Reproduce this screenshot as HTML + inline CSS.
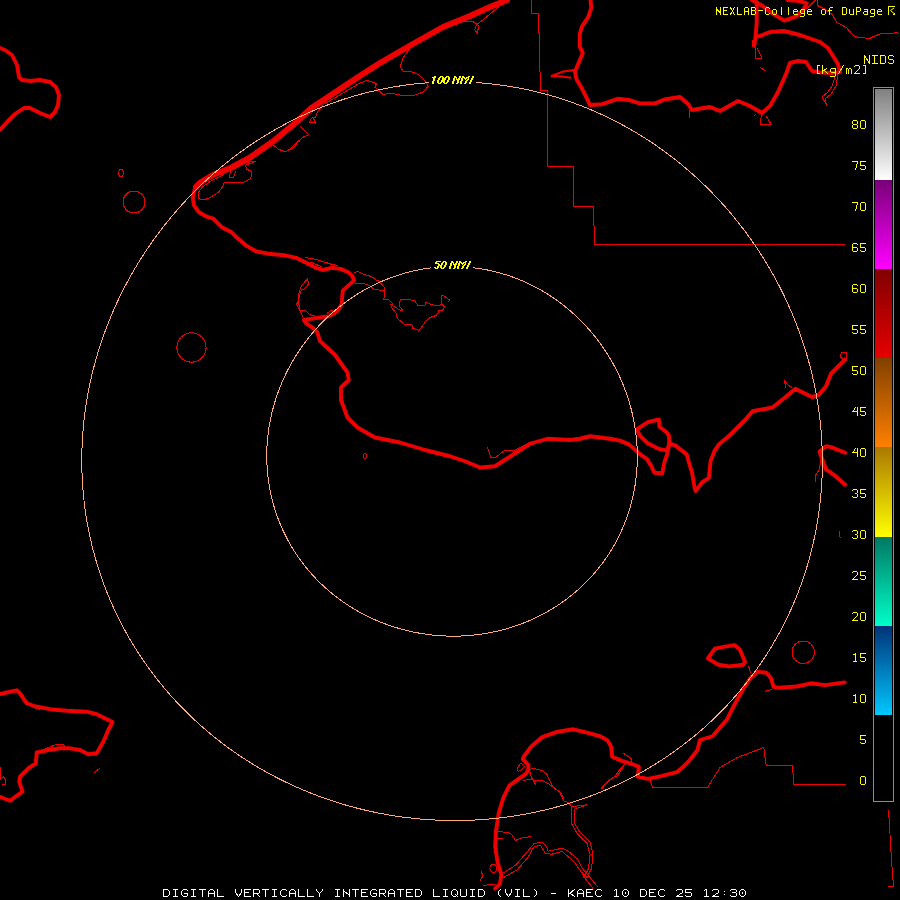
<!DOCTYPE html>
<html><head><meta charset="utf-8"><style>
html,body{margin:0;padding:0;background:#000;width:900px;height:900px;overflow:hidden}
body{position:relative;font-family:"Liberation Mono",monospace}
.t{position:absolute;white-space:pre;line-height:1;color:#ff0}
.lab{position:absolute;right:33px;font-size:14.5px;letter-spacing:-0.7px;line-height:16px;color:#ff0;font-family:"Liberation Mono",monospace}
.ring{position:absolute;font-family:"Liberation Sans",sans-serif;font-style:italic;font-weight:bold;font-size:11.5px;color:#ff0;line-height:1}
</style></head><body>
<svg width="900" height="900" viewBox="0 0 900 900" style="position:absolute;left:0;top:0"><rect width="900" height="900" fill="#000"/><g fill="none" stroke="#ee0000" stroke-width="1" stroke-linejoin="round" shape-rendering="crispEdges"><polyline points="521,762.8 518.3,766.3 517.4,769 518.3,771.7 522.3,769 524.6,766.3 521,762.8"/><polyline points="531.5,0 531.5,13.5 538.5,13.5 540.5,90.5 547.5,90.5 547.5,166.5 573.5,166.5 573.5,206.5 593.5,206.5 594.5,244.5 845,244.5"/><polyline points="815.6,0 806.7,8.9"/><polyline points="817.8,0 817.8,5.6 824.4,8.9 832.2,14.4 836.7,22.2 840,23.9 846.7,27.8 854.4,36.7 862.2,37.8 870,38.3 874.4,36.1 882.2,33.3 891,33.9 896.7,32.2 899,33.3"/><polyline points="652.8,787.5 707.5,787.5 720,767.5 737.5,757.5 763.75,747.5 766.25,765.5 792.5,765.5 793.75,784.5 846.25,784.5"/><polyline points="650,780 651.7,785.6 652.8,787.5"/><polyline points="888.5,810 889.5,825 890.5,843 891.5,860 892.5,873 893.5,886.5 888.5,887"/><polyline points="501.3,4.7 482.6,20.2 476.4,24.9 474.9,29.5 477.2,33.4 478.8,25.7 473.3,21.8 464,21 454.6,24.9 442.2,27.2 426.7,34.2 411.1,46.7 403.3,57.5 400.2,66.9 403.3,71.5 411.1,71.5 418.9,74.7 425.1,80.9 428.2,86.3 423.5,91.8 415.8,94.9 404.4,95.9 392,93.5 382.6,94.3 378,89.7 374.9,87.3 376.4,83.4 367.1,80.3 359.3,83.4 350,88.9 342.2,93.5 334.4,98.2 323.5,104.4 317.3,112.2 315.8,116.9 311.1,118.4 309.5,122.3 315.8,123.1 312.7,116.9"/><polyline points="300.2,126.2 308.8,134.8 303.3,137.1 295.6,143.3 289.3,149.5 285.3,152 278.7,149.3 272,144"/><polyline points="285.3,152 293.3,148 297.3,142.7 300,140.7"/><polyline points="244,162.7 256,161.3 249.3,164 245.3,165.3 246.7,169.3 252,171.3 250.7,178.7 242.7,182.7 233.3,182.7 224,182.7 222.7,186.7 218.7,192 210.7,197.3 204,200 198.7,198.7 198.7,192 202.7,186.7 210.7,181.3 218.7,177.3 225.3,173.3"/><polyline points="230.7,170.7 229.3,177.3 233.3,178 236,170.7"/><polyline points="305,257.8 311.7,258.3 321.7,261.1 331.7,264.4 338.3,265.6"/><polyline points="310.6,262.2 316.1,264.4 321.7,266.7"/><polyline points="353.9,272.2 358.3,271.7 362.8,273.9 371.7,276.7 376.1,280 379,281 384.5,287.5 384,293 385,294.5 383.5,300 388,299 393,304 391.5,307.5 396,313 397.5,318.5 404,324 412,325 412,328 419,330.5 426,321 430,317.5 436,315.5 439,312 438,310 442,311 444.5,307 442,304.5 441,295 444,296 449.5,300 448.5,302.5"/><polyline points="442,304.5 440,305 434,305 430,304 426,302 425,305 418,306 415,301 409,299.5 401,299.5 399,303 400,307 402.5,310 400,310 395,307 390,304"/><polyline points="355,283.9 362.8,283.3 369.4,285.6 373.9,288.9 379.4,290 384.5,290"/><polyline points="307.8,278.3 308.3,284.4 303.9,288.9 300.6,291.1 299.4,296.7 296.7,304.4 299.4,310 306.1,311.1 309.4,314.4 315,316.1 321.7,316.7"/><polyline points="307.8,278.3 301.7,285.6 299.4,291.1 298.3,297.8 299.4,308.9 302.8,316.7"/><polyline points="327.2,313.3 331.7,310 336.1,314.4"/><polyline points="487.5,447.5 491,457.5 495,458 505,450 515,450 525,445 530,443"/><polyline points="752,40 752,46 756,48 755,59 762,58 757,48"/><polyline points="760,67 765,71"/><polyline points="762,113 760,124 771,124 766,116"/><polyline points="756,114 754,116"/><polyline points="690,110 689,118"/><polyline points="836,74 832,86 828,92 822,97 826,104"/><polyline points="838,74 836,86 831,94 825,99 827,106"/><polyline points="526.7,771.3 532.9,768.2 542.2,770.5 546.9,774.4 550,780.7 553.1,786.9 559.3,791.5 562.4,797.8 564,800.9 568.6,802.4 571.8,807.1 571.4,823.3 577.6,834.2 587,843.5 590.1,854.4 588.5,868.4 583.9,877.8"/><polyline points="574.5,809.3 574.5,823.3 580.3,832.5 590,842 593,854.4 591.5,868.4 587,877.8 582,872"/><polyline points="523.5,780.7 529.8,779.1 536,780.7 542.2,780.7 548.4,783.8 554.6,788.4 560.9,793.1 564,799.3"/><polyline points="529.8,771.3 531.3,777.5 534.4,782.2 536,785.3"/><polyline points="571.8,807.1 579.5,805.5 587.3,804.8"/><polyline points="574.5,809.3 587,804.7"/><polyline points="601.3,788.4 607.5,782.2 615.3,776 618.4,771.3 624.4,764.4"/><polyline points="602.2,788.9 605.6,783.3 612.2,777.8 617.8,775.6 621.1,770 624.4,764.4"/><polyline points="498.3,831.1 510.8,833.4 515.4,840.4 521.7,838.1 531,836.5"/><polyline points="498.3,838.9 503,838.9"/><polyline points="503,873.1 515.4,865.3 526.3,852.9 534.1,843.5 541.9,842 546.5,846.7 548.1,851.3 562.1,848.2 568.3,851.3 577.6,859.1 582.3,868.4 590.1,877.8 597.9,887.1"/><polyline points="503,877.8 517,870 527.9,857.5 534.1,846.7 540.3,845.1 545,852.9 551.2,854.4 562.1,851.3 574.5,862.2 580.8,871.5 587,880.9 593.2,888.6"/><polyline points="482.8,885.5 495.2,884"/><polyline points="481,871 483,876 480,881"/><polyline points="748.7,666.4 750.4,672.7"/><polyline points="764.7,691.3 771.8,689.6"/><polyline points="623.3,753.3 631.1,758.3 632,762"/><polyline points="822,455 819,470 815,476 816,482"/><polyline points="843,360 840,356 842,352 846,352 846,358"/><polyline points="786,388 784,380 787,384 792,388"/><polyline points="94.2,772.5 100,768.3"/><polyline points="0,766.7 0,780 3.3,776.7 5.8,780 5,785 1.7,784"/><polyline points="26,700 33,707 40,710"/><polyline points="45,749 55,745 63,744 65,747"/><polyline points="840,531 839,536 841,538"/><ellipse cx="134" cy="202" rx="11" ry="11"/><ellipse cx="121" cy="173" rx="2.5" ry="3.5"/><ellipse cx="191.5" cy="347.5" rx="14.6" ry="14.7"/><ellipse cx="803.2" cy="652.2" rx="11.2" ry="11.2"/><ellipse cx="365" cy="456" rx="1.5" ry="2.5"/><ellipse cx="493.4" cy="868.4" rx="3.5" ry="4"/></g><g fill="none" stroke="#ee0000" stroke-width="3.9" stroke-linejoin="round" stroke-linecap="round"><polyline points="0,48 5,50 12,55 17,65 19,77 22,80 30,81 40,80 50,82 56,87 59,95 58,105 55,112 50,117 40,113 30,108 24,108 15,114 8,121 0,130"/><polyline points="200,182.7 194.7,189.3 192.7,197.3 194,205.3 198.7,212 206.7,216.7 213.3,218.7 221.8,227.2 231.1,231.9 237.3,238.1 246.7,245.9 256,251.3 268.4,253.7 284,255.2 296.1,257.8 307.2,263.3 316.1,267.8 322.8,270 331.7,267.8 340.6,268.9 348.3,272.2 352.8,276.7 353.9,280.6 348.3,285.6 342.8,290.6 342.2,296.7 341.7,304.4 337.2,311.1 329.4,316.1 318.3,317.8 307.2,319.4 303.9,320 306.1,323.3 312.8,327.8 317.2,332.2 320,341 335,355 347.5,372.5 348.75,380 341,387.5 341,400 347.5,417.5 357.5,427.5 375,437.5 400,442.5 425,450 450,456.25 465,461.25 480,467.5 495,466.25 512.5,455 530,443.75 547.5,438.75 570,440 580,438.75 590,436.25 610,438.75 620,440.6 628.9,444.4 638.9,453.3 646.7,458.9 651.1,465.6 654.4,472.8 662.2,473.3 664.4,462.2 666.7,455.6 667.8,451.1 669.4,443.3 675.6,445.6 686.7,454.4 688.9,462.2 692.2,473.3 694.4,486.7 695.6,491.1 702.2,482.2 708.9,477.8 710.6,461.1 714.4,451.1 718.9,444.4 730,435 745,420 752.5,411.25 772.5,407.5 785,397.5 795.3,388.8 812,397 818.4,395.2 826,386.3 831.1,373.5 845.2,359.4"/><polyline points="590.5,0 591.3,7.8 588.2,17.1 582,26.4 579.7,34.2 579.7,46.7 582.8,52.9 578.9,62.2 575,71.5 576.5,79.3 582,88.6 588.2,101.1 589.8,105 602.2,104.2 617.8,98.8 630.2,100.3 639.5,103.4 655.1,103.4 664.4,99.5 680,97 688,104 692,110 710,107 720,111 738,101 750,106 762,113 770,106 778,92 786,74 790,63 798,61 806,62 812,71 820,72.4 832,73 840,72 838,64 828,48 820,42 800,35 784,31 770,32 760,36 755.6,36.7"/><polyline points="752.2,0 756.7,2.2 756.7,22.2 755.6,36.7 754.4,45"/><polyline points="752.2,0 762.2,5.6 772.2,13.3 784.4,20.6 795.6,16.7 803.3,10 806.7,3.3 800,1.1 787.8,0"/><polyline points="845.2,452.7 831.1,447.1 826,446.3 819.6,451.5 820.9,455.3 826,469.4 835,475.7 845.2,484.7"/><polyline points="844.7,682.4 825.1,685.1 810.9,683.3 796.7,686.5 778.9,687.8 773.6,686.9 770.9,678 766.4,672.7 757.6,671.8 750.4,678 743.3,688.7 734.4,704.7 727.3,718.9 712.5,736.25 700,740 697.5,750 688.9,761.1 683.3,766.7 676.7,772.2 661.1,776.1 647.8,778.9 637.8,776.7 638.9,766.7 630,763.3 621.1,760.6 612.2,756.7 611.1,746.7 607.8,740.6 601.1,736.7 590,733.3 573.3,729.3 557.8,731.7 542.2,737.1 531.3,746.4 523.7,756.6 522.8,759.2 526.3,762.8 528.6,765.4 528.1,769.9 526.3,773.4 522.8,776.1 518.3,779.2 512.1,783.7 509.5,785.3 503.3,797.8 498.7,813.3 496,831.1 495.2,846.7 497.6,862.2 501.4,874.7 499.9,884 495.2,888.6"/><polyline points="0,694.2 6.7,692.5 16.7,690.3 20,693.3 26.7,703.3 33.3,705.8 50,709.2 66.7,710.8 86.7,711.7 96.7,714.2 112.5,722 108.3,730 103.3,741.7 96.7,753.3 88.3,754.2 80,750 70,748.3 60,748.3 48.3,750 36.7,752.5 35.8,763.3 28.3,768.3 20,776.7 19.2,781.7 22.5,791.7 16.7,795.8 10,800.8 1.7,797.5 0,796.7"/><polygon points="636.7,429.4 647.8,422.2 658.9,419.4 659.4,426.7 666.7,432.2 668.9,435.6 669.4,443.3 667.2,450.6 658.9,448.9 647.8,443.3 640,435.6"/><polygon points="707.8,658.4 714.9,648.7 723.8,646.9 734.4,645.1 739.8,649.6 745.1,662 743.3,664.7 729.1,666.4 718.4,664.7"/></g><g fill="none" stroke="#ee0000" stroke-width="2"><polyline points="574.2,70 563.3,71.5 550.9,76.2 560.2,76.2 571.1,77.8"/></g><g fill="none" stroke="#ee0000" stroke-width="6" stroke-linejoin="round" stroke-linecap="round"><polyline points="507,0 490,7 470,16 443,27 411,45 380,63 357.8,77.2 311.1,108.3 297.3,121.3 273.3,141.3 249.3,158 230.7,168 213.3,174.7 200,182.7 196,187"/></g><g fill="none" stroke="#ffaa7d" stroke-width="1" shape-rendering="crispEdges"><polygon points="637.23,451.5 637.29,454.73 637.3,457.97 637.25,461.21 637.14,464.45 636.98,467.68 636.75,470.92 636.47,474.15 636.14,477.38 635.74,480.6 635.29,483.82 634.78,487.03 634.21,490.23 633.59,493.42 632.9,496.6 632.16,499.77 631.36,502.93 630.5,506.07 629.59,509.2 628.61,512.31 627.58,515.41 626.5,518.48 625.35,521.54 624.15,524.57 622.89,527.59 621.58,530.58 620.21,533.54 618.79,536.48 617.31,539.4 615.78,542.28 614.19,545.14 612.55,547.97 610.86,550.76 609.11,553.53 607.32,556.26 605.47,558.96 603.57,561.62 601.62,564.25 599.63,566.84 597.58,569.39 595.49,571.91 593.36,574.38 591.18,576.81 588.95,579.21 586.68,581.56 584.36,583.86 582.01,586.13 579.61,588.35 577.18,590.52 574.7,592.65 572.19,594.74 569.64,596.77 567.05,598.76 564.43,600.7 561.78,602.59 559.09,604.44 556.37,606.23 553.61,607.97 550.83,609.67 548.02,611.31 545.19,612.9 542.32,614.44 539.43,615.93 536.51,617.37 533.58,618.75 530.61,620.09 527.63,621.37 524.63,622.59 521.6,623.77 518.56,624.89 515.5,625.96 512.42,626.98 509.33,627.94 506.22,628.85 503.1,629.7 499.96,630.5 496.82,631.25 493.66,631.95 490.49,632.59 487.31,633.18 484.13,633.71 480.94,634.2 477.74,634.62 474.53,635 471.32,635.32 468.11,635.59 464.89,635.8 461.67,635.97 458.45,636.08 455.22,636.13 452,636.13 448.78,636.09 445.56,635.98 442.34,635.83 439.13,635.62 435.91,635.36 432.71,635.05 429.51,634.68 426.31,634.26 423.13,633.79 419.95,633.27 416.78,632.69 413.62,632.07 410.47,631.39 407.33,630.66 404.2,629.88 401.09,629.04 397.99,628.16 394.91,627.22 391.84,626.23 388.78,625.19 385.75,624.1 382.73,622.96 379.73,621.76 376.75,620.52 373.79,619.22 370.85,617.88 367.94,616.48 365.04,615.04 362.18,613.54 359.34,612 356.52,610.41 353.73,608.76 350.97,607.07 348.24,605.33 345.54,603.55 342.87,601.71 340.23,599.83 337.62,597.9 335.05,595.92 332.51,593.9 330.01,591.84 327.54,589.72 325.11,587.57 322.73,585.37 320.38,583.12 318.07,580.84 315.8,578.51 313.57,576.14 311.39,573.73 309.25,571.28 307.15,568.79 305.1,566.27 303.1,563.7 301.15,561.1 299.24,558.46 297.38,555.79 295.57,553.09 293.81,550.35 292.1,547.58 290.45,544.77 288.84,541.94 287.29,539.08 285.79,536.19 284.35,533.27 282.96,530.32 281.63,527.36 280.35,524.36 279.12,521.35 277.96,518.31 276.85,515.25 275.79,512.17 274.8,509.08 273.86,505.96 272.98,502.83 272.15,499.69 271.39,496.53 270.68,493.36 270.04,490.18 269.45,486.98 268.92,483.78 268.44,480.57 268.03,477.36 267.67,474.13 267.38,470.9 267.14,467.67 266.96,464.44 266.84,461.2 266.77,457.97 266.77,454.73 266.82,451.5 266.93,448.27 267.09,445.04 267.32,441.82 267.6,438.61 267.93,435.4 268.32,432.19 268.77,429 269.27,425.82 269.82,422.65 270.43,419.49 271.1,416.34 271.82,413.2 272.59,410.08 273.41,406.97 274.28,403.88 275.21,400.81 276.19,397.75 277.22,394.71 278.3,391.69 279.43,388.69 280.61,385.71 281.83,382.75 283.11,379.81 284.44,376.9 285.81,374 287.23,371.13 288.69,368.29 290.2,365.47 291.76,362.68 293.37,359.91 295.01,357.17 296.71,354.46 298.44,351.78 300.22,349.12 302.04,346.5 303.91,343.91 305.82,341.34 307.76,338.81 309.75,336.31 311.78,333.85 313.86,331.41 315.97,329.01 318.12,326.65 320.3,324.32 322.53,322.03 324.79,319.77 327.1,317.56 329.43,315.38 331.81,313.24 334.22,311.13 336.67,309.07 339.15,307.05 341.66,305.07 344.21,303.14 346.79,301.24 349.4,299.39 352.05,297.58 354.72,295.82 357.43,294.1 360.16,292.43 362.93,290.81 365.72,289.23 368.54,287.7 371.39,286.22 374.26,284.79 377.16,283.41 380.08,282.08 383.03,280.8 386,279.57 388.99,278.39 392.01,277.27 395.04,276.2 398.09,275.18 401.17,274.22 404.26,273.32 407.36,272.46 410.48,271.67 413.62,270.93 416.77,270.24 419.93,269.62 423.1,269.05 426.29,268.54 429.48,268.08 432.68,267.69 435.89,267.35 439.1,267.07 442.32,266.85 445.55,266.69 448.77,266.59 452,266.54 455.23,266.56 458.46,266.64 461.68,266.77 464.9,266.97 468.12,267.22 471.34,267.53 474.54,267.9 477.74,268.33 480.93,268.82 484.11,269.37 487.29,269.97 490.44,270.64 493.59,271.36 496.72,272.13 499.84,272.97 502.94,273.86 506.02,274.8 509.09,275.81 512.13,276.86 515.16,277.97 518.16,279.14 521.15,280.36 524.11,281.63 527.04,282.95 529.95,284.33 532.84,285.76 535.7,287.24 538.53,288.76 541.33,290.34 544.11,291.97 546.85,293.64 549.57,295.36 552.25,297.13 554.9,298.94 557.52,300.8 560.11,302.7 562.66,304.65 565.18,306.64 567.66,308.67 570.11,310.74 572.52,312.85 574.9,315.01 577.24,317.2 579.54,319.43 581.8,321.7 584.02,324.01 586.21,326.35 588.35,328.73 590.46,331.14 592.52,333.59 594.54,336.07 596.53,338.58 598.46,341.13 600.36,343.71 602.22,346.32 604.03,348.96 605.8,351.62 607.52,354.32 609.2,357.04 610.84,359.8 612.43,362.57 613.97,365.38 615.47,368.21 616.93,371.06 618.33,373.94 619.69,376.84 621,379.76 622.27,382.71 623.48,385.67 624.65,388.66 625.77,391.67 626.84,394.69 627.86,397.73 628.83,400.79 629.75,403.87 630.62,406.97 631.44,410.07 632.2,413.2 632.91,416.33 633.58,419.48 634.18,422.64 634.74,425.82 635.24,429 635.69,432.19 636.08,435.39 636.42,438.6 636.71,441.82 636.94,445.04 637.11,448.27"/><polygon points="822.21,451.5 822.33,457.96 822.35,464.43 822.24,470.9 822.03,477.38 821.7,483.84 821.26,490.31 820.7,496.77 820.03,503.22 819.24,509.66 818.33,516.09 817.32,522.51 816.18,528.91 814.93,535.29 813.56,541.65 812.08,547.98 810.48,554.29 808.77,560.57 806.94,566.83 804.99,573.05 802.93,579.23 800.76,585.38 798.47,591.48 796.07,597.55 793.56,603.57 790.94,609.55 788.2,615.48 785.35,621.35 782.4,627.18 779.33,632.94 776.16,638.66 772.88,644.31 769.5,649.9 766.01,655.42 762.42,660.88 758.73,666.28 754.94,671.6 751.05,676.85 747.06,682.03 742.98,687.13 738.8,692.15 734.53,697.1 730.17,701.96 725.71,706.74 721.18,711.44 716.55,716.05 711.85,720.58 707.06,725.01 702.19,729.36 697.24,733.62 692.22,737.78 687.12,741.85 681.95,745.82 676.71,749.7 671.4,753.48 666.03,757.17 660.59,760.75 655.09,764.24 649.53,767.62 643.92,770.91 638.25,774.09 632.52,777.17 626.74,780.14 620.92,783.01 615.04,785.78 609.12,788.45 603.16,791.01 597.15,793.46 591.11,795.81 585.03,798.05 578.91,800.19 572.76,802.21 566.58,804.14 560.37,805.95 554.13,807.66 547.86,809.27 541.57,810.76 535.26,812.15 528.93,813.44 522.58,814.61 516.22,815.68 509.83,816.64 503.44,817.5 497.03,818.25 490.61,818.89 484.19,819.43 477.76,819.86 471.32,820.18 464.88,820.4 458.44,820.51 452,820.52 445.56,820.42 439.12,820.22 432.69,819.91 426.27,819.49 419.85,818.97 413.44,818.34 407.05,817.61 400.66,816.78 394.29,815.84 387.94,814.79 381.61,813.64 375.29,812.39 368.99,811.04 362.72,809.58 356.47,808.01 350.25,806.34 344.05,804.57 337.89,802.7 331.75,800.72 325.65,798.64 319.58,796.46 313.55,794.18 307.55,791.8 301.6,789.31 295.68,786.72 289.81,784.03 283.99,781.25 278.21,778.36 272.48,775.37 266.8,772.28 261.17,769.1 255.59,765.82 250.08,762.44 244.62,758.96 239.22,755.39 233.88,751.72 228.6,747.96 223.39,744.1 218.25,740.15 213.18,736.11 208.18,731.98 203.25,727.76 198.4,723.45 193.62,719.06 188.93,714.57 184.31,710 179.78,705.35 175.33,700.62 170.96,695.8 166.69,690.91 162.5,685.93 158.41,680.88 154.4,675.75 150.5,670.56 146.68,665.29 142.97,659.94 139.35,654.54 135.84,649.06 132.42,643.52 129.11,637.92 125.91,632.26 122.8,626.54 119.81,620.76 116.92,614.93 114.15,609.04 111.48,603.11 108.92,597.13 106.48,591.1 104.15,585.03 101.93,578.92 99.82,572.77 97.83,566.58 95.95,560.35 94.19,554.1 92.55,547.81 91.02,541.5 89.61,535.16 88.31,528.8 87.14,522.42 86.08,516.02 85.13,509.61 84.31,503.18 83.6,496.73 83,490.28 82.53,483.82 82.17,477.36 81.93,470.89 81.8,464.43 81.79,457.96 81.89,451.5 82.11,445.04 82.44,438.59 82.88,432.16 83.44,425.73 84.11,419.31 84.89,412.92 85.78,406.53 86.78,400.17 87.9,393.83 89.12,387.51 90.44,381.22 91.88,374.95 93.42,368.71 95.06,362.51 96.81,356.33 98.66,350.18 100.62,344.07 102.68,338 104.83,331.96 107.09,325.96 109.45,320.01 111.9,314.09 114.45,308.22 117.1,302.39 119.84,296.61 122.68,290.88 125.61,285.19 128.63,279.56 131.74,273.98 134.95,268.45 138.24,262.97 141.62,257.55 145.09,252.19 148.65,246.89 152.29,241.64 156.02,236.46 159.83,231.33 163.73,226.28 167.7,221.28 171.76,216.35 175.9,211.49 180.12,206.7 184.41,201.97 188.79,197.32 193.24,192.74 197.76,188.23 202.36,183.8 207.04,179.44 211.78,175.16 216.6,170.96 221.49,166.84 226.44,162.8 231.47,158.85 236.56,154.97 241.72,151.19 246.94,147.49 252.23,143.88 257.57,140.35 262.98,136.92 268.45,133.58 273.98,130.33 279.56,127.18 285.19,124.13 290.89,121.17 296.63,118.31 302.42,115.55 308.27,112.89 314.16,110.33 320.09,107.87 326.07,105.52 332.1,103.28 338.16,101.14 344.26,99.11 350.4,97.18 356.58,95.37 362.78,93.67 369.02,92.08 375.29,90.6 381.58,89.23 387.9,87.98 394.24,86.84 400.61,85.82 406.99,84.91 413.39,84.12 419.8,83.45 426.22,82.89 432.66,82.45 439.1,82.13 445.55,81.93 452,81.84 458.45,81.87 464.9,82.02 471.35,82.29 477.79,82.68 484.22,83.19 490.65,83.81 497.06,84.55 503.45,85.41 509.83,86.39 516.19,87.48 522.52,88.69 528.84,90.02 535.12,91.45 541.38,93.01 547.61,94.68 553.81,96.45 559.97,98.35 566.1,100.35 572.18,102.46 578.23,104.68 584.24,107.01 590.2,109.45 596.11,111.99 601.98,114.64 607.8,117.39 613.57,120.24 619.28,123.19 624.94,126.25 630.54,129.4 636.09,132.65 641.58,135.99 647,139.43 652.37,142.96 657.67,146.59 662.9,150.3 668.07,154.1 673.17,157.99 678.21,161.97 683.17,166.03 688.06,170.17 692.88,174.39 697.63,178.7 702.3,183.08 706.9,187.54 711.42,192.08 715.87,196.69 720.23,201.37 724.52,206.12 728.72,210.95 732.85,215.84 736.89,220.8 740.85,225.82 744.73,230.91 748.52,236.06 752.23,241.28 755.85,246.55 759.38,251.88 762.83,257.27 766.19,262.72 769.46,268.22 772.64,273.77 775.72,279.37 778.72,285.03 781.63,290.73 784.44,296.48 787.15,302.28 789.78,308.12 792.3,314.01 794.73,319.94 797.07,325.91 799.3,331.91 801.44,337.96 803.48,344.04 805.42,350.16 807.26,356.31 808.99,362.49 810.63,368.7 812.16,374.95 813.58,381.22 814.91,387.51 816.12,393.83 817.23,400.17 818.24,406.53 819.13,412.91 819.92,419.31 820.6,425.73 821.17,432.15 821.63,438.59 821.97,445.04"/></g><defs><linearGradient id="g8" x1="0" y1="0" x2="0" y2="1"><stop offset="0" stop-color="#808080"/><stop offset="1" stop-color="#ffffff"/></linearGradient><linearGradient id="g7" x1="0" y1="0" x2="0" y2="1"><stop offset="0" stop-color="#780078"/><stop offset="1" stop-color="#ff00ff"/></linearGradient><linearGradient id="g6" x1="0" y1="0" x2="0" y2="1"><stop offset="0" stop-color="#800000"/><stop offset="1" stop-color="#e60000"/></linearGradient><linearGradient id="g5" x1="0" y1="0" x2="0" y2="1"><stop offset="0" stop-color="#804000"/><stop offset="1" stop-color="#ff8000"/></linearGradient><linearGradient id="g4" x1="0" y1="0" x2="0" y2="1"><stop offset="0" stop-color="#aa7800"/><stop offset="1" stop-color="#ffff00"/></linearGradient><linearGradient id="g3" x1="0" y1="0" x2="0" y2="1"><stop offset="0" stop-color="#007864"/><stop offset="1" stop-color="#00ffc8"/></linearGradient><linearGradient id="g2" x1="0" y1="0" x2="0" y2="1"><stop offset="0" stop-color="#003278"/><stop offset="1" stop-color="#00c8ff"/></linearGradient></defs><rect x="873.5" y="87.5" width="20" height="714" fill="#000" stroke="#8c8c8c" stroke-width="1"/><rect x="875" y="89" width="17" height="91" fill="url(#g8)"/><rect x="875" y="180" width="17" height="89" fill="url(#g7)"/><rect x="875" y="269" width="17" height="89" fill="url(#g6)"/><rect x="875" y="358" width="17" height="89" fill="url(#g5)"/><rect x="875" y="447" width="17" height="90" fill="url(#g4)"/><rect x="875" y="537" width="17" height="89" fill="url(#g3)"/><rect x="875" y="626" width="17" height="89" fill="url(#g2)"/><rect x="429" y="74" width="47" height="12" fill="#000"/><rect x="431" y="259" width="42" height="12" fill="#000"/><g fill="#ff0" shape-rendering="crispEdges"><rect x="888" y="6" width="1" height="9"/><rect x="888" y="6" width="7" height="1"/><polygon points="892,15 895,15 895,12"/><polygon points="893,6 895,6 895,8"/></g><polyline points="894,8 890.5,10.5 894,13.5" fill="none" stroke="#ff0" stroke-width="1"/><path fill="#ff0" shape-rendering="crispEdges" d="M434 76h2v1h-2zM432 77h4v1h-4zM433 78h2v1h-2zM433 79h2v1h-2zM433 80h2v1h-2zM432 81h2v1h-2zM432 82h2v1h-2zM432 83h2v1h-2zM440 76h3v1h-3zM439 77h2v1h-2zM442 77h2v1h-2zM438 78h2v1h-2zM442 78h2v1h-2zM438 79h2v1h-2zM442 79h2v1h-2zM437 80h2v1h-2zM441 80h2v1h-2zM437 81h2v1h-2zM441 81h2v1h-2zM437 82h2v1h-2zM440 82h2v1h-2zM438 83h3v1h-3zM446 76h3v1h-3zM445 77h2v1h-2zM448 77h2v1h-2zM444 78h2v1h-2zM448 78h2v1h-2zM444 79h2v1h-2zM448 79h2v1h-2zM443 80h2v1h-2zM447 80h2v1h-2zM443 81h2v1h-2zM447 81h2v1h-2zM443 82h2v1h-2zM446 82h2v1h-2zM444 83h3v1h-3zM454 76h2v1h-2zM459 76h2v1h-2zM454 77h3v1h-3zM459 77h2v1h-2zM453 78h2v1h-2zM456 78h1v1h-1zM458 78h2v1h-2zM453 79h2v1h-2zM456 79h4v1h-4zM453 80h2v1h-2zM457 80h2v1h-2zM452 81h2v1h-2zM457 81h2v1h-2zM452 82h2v1h-2zM457 82h2v1h-2zM452 83h2v1h-2zM456 83h2v1h-2zM462 76h2v1h-2zM468 76h2v1h-2zM462 77h3v1h-3zM466 77h3v1h-3zM461 78h2v1h-2zM464 78h3v1h-3zM468 78h1v1h-1zM461 79h2v1h-2zM465 79h1v1h-1zM467 79h2v1h-2zM461 80h2v1h-2zM466 80h2v1h-2zM460 81h2v1h-2zM465 81h2v1h-2zM460 82h2v1h-2zM465 82h2v1h-2zM460 83h2v1h-2zM464 83h2v1h-2zM472 76h2v1h-2zM472 77h2v1h-2zM471 78h2v1h-2zM471 79h2v1h-2zM470 80h2v1h-2zM470 81h2v1h-2zM469 82h2v1h-2zM469 83h2v1h-2zM436 261h5v1h-5zM435 262h2v1h-2zM435 263h4v1h-4zM438 264h2v1h-2zM438 265h2v1h-2zM437 266h2v1h-2zM434 267h2v1h-2zM437 267h2v1h-2zM435 268h3v1h-3zM443 261h3v1h-3zM442 262h2v1h-2zM445 262h2v1h-2zM441 263h2v1h-2zM445 263h2v1h-2zM441 264h2v1h-2zM445 264h2v1h-2zM440 265h2v1h-2zM444 265h2v1h-2zM440 266h2v1h-2zM444 266h2v1h-2zM440 267h2v1h-2zM443 267h2v1h-2zM441 268h3v1h-3zM451 261h2v1h-2zM456 261h2v1h-2zM451 262h3v1h-3zM456 262h2v1h-2zM450 263h2v1h-2zM453 263h1v1h-1zM455 263h2v1h-2zM450 264h2v1h-2zM453 264h4v1h-4zM450 265h2v1h-2zM454 265h2v1h-2zM449 266h2v1h-2zM454 266h2v1h-2zM449 267h2v1h-2zM454 267h2v1h-2zM449 268h2v1h-2zM453 268h2v1h-2zM459 261h2v1h-2zM465 261h2v1h-2zM459 262h3v1h-3zM463 262h3v1h-3zM458 263h2v1h-2zM461 263h3v1h-3zM465 263h1v1h-1zM458 264h2v1h-2zM462 264h1v1h-1zM464 264h2v1h-2zM458 265h2v1h-2zM463 265h2v1h-2zM457 266h2v1h-2zM462 266h2v1h-2zM457 267h2v1h-2zM462 267h2v1h-2zM457 268h2v1h-2zM461 268h2v1h-2zM469 261h2v1h-2zM469 262h2v1h-2zM468 263h2v1h-2zM468 264h2v1h-2zM467 265h2v1h-2zM467 266h2v1h-2zM466 267h2v1h-2zM466 268h2v1h-2z"/><g fill="none" stroke-width="1" stroke-linecap="square" stroke-linejoin="miter" shape-rendering="crispEdges"><path stroke="#ff0" d="M716.5 14.5L716.5 7.5M720.5 7.5L720.5 14.5M716.5 8.5L720.5 13.5M727.5 7.5L723.5 7.5L723.5 14.5L727.5 14.5M723.5 10.5L726.5 10.5M730.5 7.5L734.5 14.5M734.5 7.5L730.5 14.5M737.5 7.5L737.5 14.5L741.5 14.5M744.5 14.5L744.5 8.5L745.5 7.5L747.5 7.5L748.5 8.5L748.5 14.5M744.5 11.5L748.5 11.5M751.5 7.5L754.5 7.5L755.5 8.5L755.5 9.5L754.5 10.5L751.5 10.5M754.5 10.5L755.5 11.5L755.5 13.5L754.5 14.5L751.5 14.5L751.5 7.5M758.5 10.5L762.5 10.5M769.5 8.5L768.5 7.5L766.5 7.5L765.5 8.5L765.5 13.5L766.5 14.5L768.5 14.5L769.5 13.5M773.5 9.5L775.5 9.5L776.5 10.5L776.5 13.5L775.5 14.5L773.5 14.5L772.5 13.5L772.5 10.5L773.5 9.5M781.5 7.5L781.5 14.5M788.5 7.5L788.5 14.5M793.5 11.5L797.5 11.5L797.5 10.5L796.5 9.5L794.5 9.5L793.5 10.5L793.5 13.5L794.5 14.5L797.5 14.5M804.5 9.5L804.5 15.5L803.5 16.5L800.5 16.5M804.5 9.5L801.5 9.5L800.5 10.5L800.5 12.5L801.5 13.5L804.5 13.5M807.5 11.5L811.5 11.5L811.5 10.5L810.5 9.5L808.5 9.5L807.5 10.5L807.5 13.5L808.5 14.5L811.5 14.5M822.5 9.5L824.5 9.5L825.5 10.5L825.5 13.5L824.5 14.5L822.5 14.5L821.5 13.5L821.5 10.5L822.5 9.5M832.5 7.5L830.5 7.5L829.5 8.5L829.5 14.5M828.5 10.5L831.5 10.5M842.5 7.5L845.5 7.5L846.5 8.5L846.5 13.5L845.5 14.5L842.5 14.5L842.5 7.5M849.5 9.5L849.5 13.5L850.5 14.5L853.5 14.5M853.5 9.5L853.5 14.5M856.5 14.5L856.5 7.5L859.5 7.5L860.5 8.5L860.5 10.5L859.5 11.5L856.5 11.5M864.5 9.5L867.5 9.5L867.5 14.5L864.5 14.5L863.5 13.5L863.5 12.5L864.5 11.5L867.5 11.5M874.5 9.5L874.5 15.5L873.5 16.5L870.5 16.5M874.5 9.5L871.5 9.5L870.5 10.5L870.5 12.5L871.5 13.5L874.5 13.5M877.5 11.5L881.5 11.5L881.5 10.5L880.5 9.5L878.5 9.5L877.5 10.5L877.5 13.5L878.5 14.5L881.5 14.5"/><path stroke="#ff0" d="M864.5 63.5L864.5 55.5M869.5 55.5L869.5 63.5M864.5 55.5L869.5 63.5M872.5 55.5L877.5 55.5M874.5 55.5L874.5 63.5M872.5 63.5L877.5 63.5M880.5 55.5L884.5 55.5L885.5 56.5L885.5 62.5L884.5 63.5L880.5 63.5L880.5 55.5M893.5 56.5L892.5 55.5L889.5 55.5L888.5 56.5L888.5 58.5L889.5 59.5L892.5 59.5L893.5 60.5L893.5 62.5L892.5 63.5L889.5 63.5L888.5 62.5"/><path stroke="#ff0" d="M819.5 65.5L817.5 65.5L817.5 73.5L819.5 73.5M822.5 65.5L822.5 73.5M826.5 68.5L822.5 71.5M824.5 70.5L827.5 73.5M835.5 68.5L831.5 68.5L830.5 69.5L830.5 71.5L831.5 72.5L835.5 72.5M835.5 68.5L835.5 75.5L834.5 76.5L830.5 76.5M838.5 73.5L843.5 65.5M846.5 73.5L846.5 68.5L847.5 68.5L848.5 69.5L848.5 73.5M848.5 69.5L849.5 68.5L850.5 68.5L851.5 69.5L851.5 73.5M854.5 66.5L855.5 65.5L858.5 65.5L859.5 66.5L859.5 68.5L855.5 72.5L854.5 73.5L859.5 73.5M863.5 65.5L865.5 65.5L865.5 73.5L863.5 73.5"/><path stroke="#ff0" d="M853.5 120.5L856.5 120.5L857.5 121.5L857.5 123.5L856.5 124.5L853.5 124.5L852.5 123.5L852.5 121.5L853.5 120.5M853.5 124.5L852.5 125.5L852.5 127.5L853.5 128.5L856.5 128.5L857.5 127.5L857.5 125.5L856.5 124.5M861.5 120.5L864.5 120.5L865.5 121.5L865.5 127.5L864.5 128.5L861.5 128.5L860.5 127.5L860.5 121.5L861.5 120.5"/><path stroke="#ff0" d="M852.5 161.5L857.5 161.5L857.5 163.5L856.5 164.5L856.5 167.5L855.5 168.5L855.5 169.5M865.5 161.5L860.5 161.5L860.5 165.5L864.5 165.5L865.5 166.5L865.5 168.5L864.5 169.5L861.5 169.5L860.5 168.5"/><path stroke="#ff0" d="M852.5 202.5L857.5 202.5L857.5 204.5L856.5 205.5L856.5 208.5L855.5 209.5L855.5 210.5M861.5 202.5L864.5 202.5L865.5 203.5L865.5 209.5L864.5 210.5L861.5 210.5L860.5 209.5L860.5 203.5L861.5 202.5"/><path stroke="#ff0" d="M857.5 244.5L856.5 243.5L853.5 243.5L852.5 244.5L852.5 250.5L853.5 251.5L856.5 251.5L857.5 250.5L857.5 248.5L856.5 247.5L852.5 247.5M865.5 243.5L860.5 243.5L860.5 247.5L864.5 247.5L865.5 248.5L865.5 250.5L864.5 251.5L861.5 251.5L860.5 250.5"/><path stroke="#ff0" d="M857.5 285.5L856.5 284.5L853.5 284.5L852.5 285.5L852.5 291.5L853.5 292.5L856.5 292.5L857.5 291.5L857.5 289.5L856.5 288.5L852.5 288.5M861.5 284.5L864.5 284.5L865.5 285.5L865.5 291.5L864.5 292.5L861.5 292.5L860.5 291.5L860.5 285.5L861.5 284.5"/><path stroke="#ff0" d="M857.5 325.5L852.5 325.5L852.5 329.5L856.5 329.5L857.5 330.5L857.5 332.5L856.5 333.5L853.5 333.5L852.5 332.5M865.5 325.5L860.5 325.5L860.5 329.5L864.5 329.5L865.5 330.5L865.5 332.5L864.5 333.5L861.5 333.5L860.5 332.5"/><path stroke="#ff0" d="M857.5 366.5L852.5 366.5L852.5 370.5L856.5 370.5L857.5 371.5L857.5 373.5L856.5 374.5L853.5 374.5L852.5 373.5M861.5 366.5L864.5 366.5L865.5 367.5L865.5 373.5L864.5 374.5L861.5 374.5L860.5 373.5L860.5 367.5L861.5 366.5"/><path stroke="#ff0" d="M857.5 407.5L857.5 415.5M855.5 407.5L854.5 408.5L854.5 409.5L853.5 410.5L852.5 411.5L857.5 411.5M865.5 407.5L860.5 407.5L860.5 411.5L864.5 411.5L865.5 412.5L865.5 414.5L864.5 415.5L861.5 415.5L860.5 414.5"/><path stroke="#ff0" d="M857.5 448.5L857.5 456.5M855.5 448.5L854.5 449.5L854.5 450.5L853.5 451.5L852.5 452.5L857.5 452.5M861.5 448.5L864.5 448.5L865.5 449.5L865.5 455.5L864.5 456.5L861.5 456.5L860.5 455.5L860.5 449.5L861.5 448.5"/><path stroke="#ff0" d="M852.5 490.5L853.5 489.5L856.5 489.5L857.5 490.5L857.5 492.5L856.5 493.5L855.5 493.5M856.5 493.5L857.5 494.5L857.5 496.5L856.5 497.5L853.5 497.5L852.5 496.5M865.5 489.5L860.5 489.5L860.5 493.5L864.5 493.5L865.5 494.5L865.5 496.5L864.5 497.5L861.5 497.5L860.5 496.5"/><path stroke="#ff0" d="M852.5 531.5L853.5 530.5L856.5 530.5L857.5 531.5L857.5 533.5L856.5 534.5L855.5 534.5M856.5 534.5L857.5 535.5L857.5 537.5L856.5 538.5L853.5 538.5L852.5 537.5M861.5 530.5L864.5 530.5L865.5 531.5L865.5 537.5L864.5 538.5L861.5 538.5L860.5 537.5L860.5 531.5L861.5 530.5"/><path stroke="#ff0" d="M852.5 572.5L853.5 571.5L856.5 571.5L857.5 572.5L857.5 574.5L853.5 578.5L852.5 579.5L857.5 579.5M865.5 571.5L860.5 571.5L860.5 575.5L864.5 575.5L865.5 576.5L865.5 578.5L864.5 579.5L861.5 579.5L860.5 578.5"/><path stroke="#ff0" d="M852.5 613.5L853.5 612.5L856.5 612.5L857.5 613.5L857.5 615.5L853.5 619.5L852.5 620.5L857.5 620.5M861.5 612.5L864.5 612.5L865.5 613.5L865.5 619.5L864.5 620.5L861.5 620.5L860.5 619.5L860.5 613.5L861.5 612.5"/><path stroke="#ff0" d="M853.5 654.5L854.5 654.5L855.5 653.5L855.5 661.5M853.5 661.5L856.5 661.5M865.5 653.5L860.5 653.5L860.5 657.5L864.5 657.5L865.5 658.5L865.5 660.5L864.5 661.5L861.5 661.5L860.5 660.5"/><path stroke="#ff0" d="M853.5 695.5L854.5 695.5L855.5 694.5L855.5 702.5M853.5 702.5L856.5 702.5M861.5 694.5L864.5 694.5L865.5 695.5L865.5 701.5L864.5 702.5L861.5 702.5L860.5 701.5L860.5 695.5L861.5 694.5"/><path stroke="#ff0" d="M865.5 735.5L860.5 735.5L860.5 739.5L864.5 739.5L865.5 740.5L865.5 742.5L864.5 743.5L861.5 743.5L860.5 742.5"/><path stroke="#ff0" d="M861.5 776.5L864.5 776.5L865.5 777.5L865.5 783.5L864.5 784.5L861.5 784.5L860.5 783.5L860.5 777.5L861.5 776.5"/><path stroke="#fff" d="M163.5 889.5L167.5 889.5L169.5 891.5L169.5 894.5L167.5 896.5L163.5 896.5L163.5 889.5M173.5 889.5L177.5 889.5M175.5 889.5L175.5 896.5M173.5 896.5L177.5 896.5M187.5 890.5L186.5 889.5L183.5 889.5L181.5 891.5L181.5 894.5L183.5 896.5L186.5 896.5L187.5 895.5L187.5 893.5L184.5 893.5M191.5 889.5L195.5 889.5M193.5 889.5L193.5 896.5M191.5 896.5L195.5 896.5M199.5 889.5L205.5 889.5M202.5 889.5L202.5 896.5M208.5 896.5L208.5 891.5L210.5 889.5L212.5 889.5L214.5 891.5L214.5 896.5M208.5 893.5L214.5 893.5M217.5 889.5L217.5 896.5L223.5 896.5M235.5 889.5L235.5 892.5L238.5 896.5L241.5 892.5L241.5 889.5M250.5 889.5L244.5 889.5L244.5 896.5L250.5 896.5M244.5 892.5L248.5 892.5M253.5 896.5L253.5 889.5L258.5 889.5L259.5 890.5L259.5 892.5L258.5 893.5L253.5 893.5M256.5 893.5L259.5 896.5M262.5 889.5L268.5 889.5M265.5 889.5L265.5 896.5M272.5 889.5L276.5 889.5M274.5 889.5L274.5 896.5M272.5 896.5L276.5 896.5M286.5 890.5L285.5 889.5L282.5 889.5L280.5 891.5L280.5 894.5L282.5 896.5L285.5 896.5L286.5 895.5M289.5 896.5L289.5 891.5L291.5 889.5L293.5 889.5L295.5 891.5L295.5 896.5M289.5 893.5L295.5 893.5M298.5 889.5L298.5 896.5L304.5 896.5M307.5 889.5L307.5 896.5L313.5 896.5M316.5 889.5L316.5 890.5L319.5 893.5L322.5 890.5L322.5 889.5M319.5 893.5L319.5 896.5M335.5 889.5L339.5 889.5M337.5 889.5L337.5 896.5M335.5 896.5L339.5 896.5M343.5 896.5L343.5 889.5M349.5 889.5L349.5 896.5M343.5 890.5L349.5 895.5M352.5 889.5L358.5 889.5M355.5 889.5L355.5 896.5M367.5 889.5L361.5 889.5L361.5 896.5L367.5 896.5M361.5 892.5L365.5 892.5M376.5 890.5L375.5 889.5L372.5 889.5L370.5 891.5L370.5 894.5L372.5 896.5L375.5 896.5L376.5 895.5L376.5 893.5L373.5 893.5M379.5 896.5L379.5 889.5L384.5 889.5L385.5 890.5L385.5 892.5L384.5 893.5L379.5 893.5M382.5 893.5L385.5 896.5M388.5 896.5L388.5 891.5L390.5 889.5L392.5 889.5L394.5 891.5L394.5 896.5M388.5 893.5L394.5 893.5M397.5 889.5L403.5 889.5M400.5 889.5L400.5 896.5M412.5 889.5L406.5 889.5L406.5 896.5L412.5 896.5M406.5 892.5L410.5 892.5M415.5 889.5L419.5 889.5L421.5 891.5L421.5 894.5L419.5 896.5L415.5 896.5L415.5 889.5M433.5 889.5L433.5 896.5L439.5 896.5M443.5 889.5L447.5 889.5M445.5 889.5L445.5 896.5M443.5 896.5L447.5 896.5M453.5 889.5L455.5 889.5L457.5 891.5L457.5 894.5L455.5 896.5L453.5 896.5L451.5 894.5L451.5 891.5L453.5 889.5M455.5 894.5L457.5 896.5M460.5 889.5L460.5 895.5L461.5 896.5L465.5 896.5L466.5 895.5L466.5 889.5M470.5 889.5L474.5 889.5M472.5 889.5L472.5 896.5M470.5 896.5L474.5 896.5M478.5 889.5L482.5 889.5L484.5 891.5L484.5 894.5L482.5 896.5L478.5 896.5L478.5 889.5M500.5 889.5L498.5 891.5L498.5 894.5L500.5 896.5M505.5 889.5L505.5 892.5L508.5 896.5L511.5 892.5L511.5 889.5M515.5 889.5L519.5 889.5M517.5 889.5L517.5 896.5M515.5 896.5L519.5 896.5M523.5 889.5L523.5 896.5L529.5 896.5M534.5 889.5L536.5 891.5L536.5 894.5L534.5 896.5M551.5 893.5L555.5 893.5M568.5 889.5L568.5 896.5M574.5 889.5L569.5 893.5M570.5 893.5L574.5 896.5M568.5 893.5L569.5 893.5M577.5 896.5L577.5 891.5L579.5 889.5L581.5 889.5L583.5 891.5L583.5 896.5M577.5 893.5L583.5 893.5M592.5 889.5L586.5 889.5L586.5 896.5L592.5 896.5M586.5 892.5L590.5 892.5M601.5 890.5L600.5 889.5L597.5 889.5L595.5 891.5L595.5 894.5L597.5 896.5L600.5 896.5L601.5 895.5M614.5 890.5L615.5 889.5L616.5 889.5L616.5 896.5M614.5 896.5L618.5 896.5M624.5 889.5L626.5 889.5L628.5 891.5L628.5 894.5L626.5 896.5L624.5 896.5L622.5 894.5L622.5 891.5L624.5 889.5M625.5 892.5L625.5 893.5M640.5 889.5L644.5 889.5L646.5 891.5L646.5 894.5L644.5 896.5L640.5 896.5L640.5 889.5M655.5 889.5L649.5 889.5L649.5 896.5L655.5 896.5M649.5 892.5L653.5 892.5M664.5 890.5L663.5 889.5L660.5 889.5L658.5 891.5L658.5 894.5L660.5 896.5L663.5 896.5L664.5 895.5M676.5 890.5L677.5 889.5L681.5 889.5L682.5 890.5L682.5 892.5L676.5 896.5L682.5 896.5M691.5 889.5L685.5 889.5L685.5 892.5L690.5 892.5L691.5 893.5L691.5 895.5L690.5 896.5L686.5 896.5L685.5 895.5M704.5 890.5L705.5 889.5L706.5 889.5L706.5 896.5M704.5 896.5L708.5 896.5M712.5 890.5L713.5 889.5L717.5 889.5L718.5 890.5L718.5 892.5L712.5 896.5L718.5 896.5M724.5 891.5h0.01L724.5 891.5M724.5 894.5h0.01L724.5 894.5M730.5 890.5L731.5 889.5L735.5 889.5L736.5 890.5L736.5 891.5L735.5 892.5L732.5 892.5M735.5 892.5L736.5 893.5L736.5 895.5L735.5 896.5L731.5 896.5L730.5 895.5M741.5 889.5L743.5 889.5L745.5 891.5L745.5 894.5L743.5 896.5L741.5 896.5L739.5 894.5L739.5 891.5L741.5 889.5M742.5 892.5L742.5 893.5"/></g></svg>
</body></html>
